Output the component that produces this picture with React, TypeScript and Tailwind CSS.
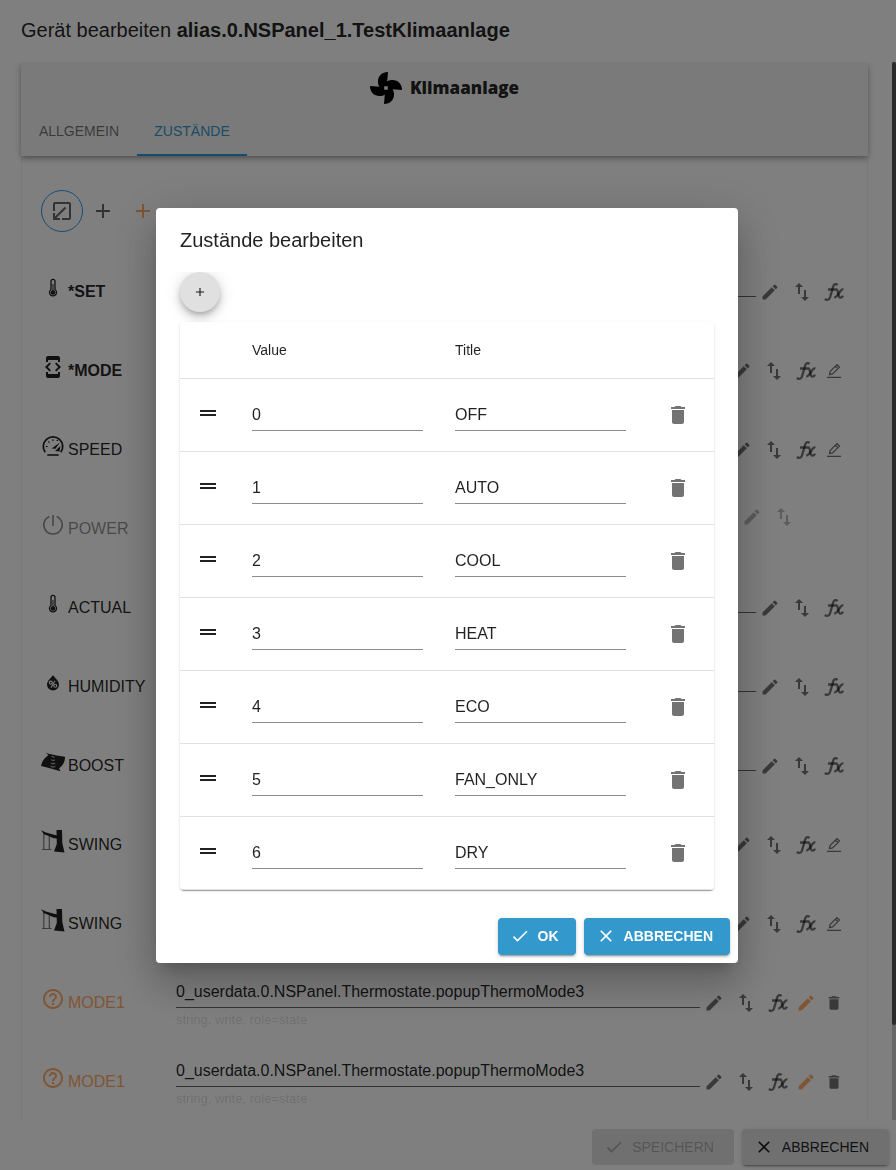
import React, { useState } from "react";
import {
  MdAdd,
  MdCheck,
  MdClose,
  MdDelete,
  MdDeveloperMode,
  MdDragHandle,
  MdEdit,
  MdHelpOutline,
  MdImportExport,
  MdOpenInNew,
} from "react-icons/md";

type IconProps = { className?: string };

const FanIcon: React.FC<IconProps> = ({ className }) => (
  <svg viewBox="0 0 32 32" className={className} fill="currentColor" aria-hidden="true">
    <path
      fillRule="evenodd"
      d="M18 0C12 0 8 4 8 9.500C8 12 8.500 13.500 9.500 14.800L0 14C0 20 4 24 9.500 24C12 24 13.500 23.500 14.800 22.500L14 32C20 32 24 28 24 22.500C24 20 23.500 18.500 22.500 17.200L32 18C32 12 28 8 22.500 8C20 8 18.500 8.500 17.200 9.500ZM14.200 14.200h3.600v3.600h-3.600z"
    />
  </svg>
);

const ThermometerIcon: React.FC<IconProps> = ({ className }) => (
  <svg viewBox="0 0 24 24" className={className} fill="none" stroke="currentColor" aria-hidden="true">
    <path d="M10 13.500V5.400a2 2 0 0 1 4 0v8.100a3.500 3.500 0 1 1-4 0z" strokeWidth="1.300" />
    <circle cx="12" cy="16.500" r="2.300" fill="currentColor" stroke="none" />
    <path d="M12 8v7" strokeWidth="1" />
  </svg>
);

const SpeedIcon: React.FC<IconProps> = ({ className }) => (
  <svg viewBox="0 0 24 24" className={className} fill="none" stroke="currentColor" aria-hidden="true">
    <path d="M4.2 18.3A9.7 9.7 0 1 1 19.8 18.3" strokeWidth="1.8" />
    <path d="M6.3 21h11.4" strokeWidth="1.6" />
    <path d="M5 12.5h1.8M7.3 7.5l1.2 1.2M12 5.2v1.7" strokeWidth="1.2" />
    <path d="M10.5 14.5L19 8.5l-4.5 6.3zM14 17l5.5-5-1 5.5zM15 7l1.5-1.5.8 1.6z" fill="currentColor" stroke="none" />
  </svg>
);

const PowerIcon: React.FC<IconProps> = ({ className }) => (
  <svg viewBox="0 0 24 24" className={className} fill="none" stroke="currentColor" strokeWidth="1.6" aria-hidden="true">
    <path d="M8.3 3.4a9.2 9.2 0 1 0 7.4 0M12 2v11" />
  </svg>
);

const HumidityIcon: React.FC<IconProps> = ({ className }) => (
  <svg viewBox="0 0 24 24" className={className} aria-hidden="true">
    <path d="M12 4c2 3 6 6 6 9.6a6 6 0 0 1-12 0C6 10 10 7 12 4z" fill="currentColor" />
    <g fill="none" stroke="#fff" strokeWidth="1.1">
      <circle cx="9.8" cy="11.6" r="1.5" />
      <circle cx="14.2" cy="14.8" r="1.5" />
      <path d="M14 9.8l-4 6.8" />
    </g>
  </svg>
);

const BoostIcon: React.FC<IconProps> = ({ className }) => (
  <svg viewBox="0 0 24 24" className={className} aria-hidden="true">
    <path d="M4.500 3l11 2.500 8.500 1.200c0 5-2 8.800-6 11.500l1.500 3L9 18.200 0 16c1-5 3.500-8 7.500-11z" fill="currentColor" />
    <g fill="none" stroke="#fff" strokeWidth="1" opacity=".8">
      <path d="M10.500 6.500l3 .8M10.300 9.600c1 1.100 2.600 1.100 3.600.2M9.800 12.900c1.200 1.200 3.200 1.200 4.400.1M9.500 16c1.400 1.400 3.600 1.400 5 .2" />
    </g>
  </svg>
);

const SwingIcon: React.FC<IconProps> = ({ className }) => (
  <svg viewBox="0 0 24 24" className={className} aria-hidden="true">
    <path d="M15.500 1H21l.3 13 2.200 9.500-10.500-1L15.800 15z" fill="currentColor" />
    <path d="M0 1.200l5 2.300 3.500 1L16 6.500v3l-3.500-.2-5.500-2.600-4-1.500z" fill="currentColor" />
    <path d="M2.800 4v16M8.300 7v13M1 20.500h9.500" fill="none" stroke="currentColor" strokeWidth="1.200" opacity=".6" />
  </svg>
);

const FunctionIcon: React.FC<IconProps> = ({ className }) => (
  <svg viewBox="0 0 20 18" className={className} fill="none" stroke="currentColor" strokeWidth="2.300" aria-hidden="true">
    <path d="M13.300 2.200C12.500.6 10.300.6 9.300 3.200L6 14.500C5.300 17 3 17.500.8 16" />
    <path d="M4 6.500h8.500c2 0 1.200 8.200 3.800 8.200 1.400 0 2.200-.8 2.700-2" />
    <path d="M19.400 6.500c-3.600-1.200-5 8.300-9.200 7.800" />
  </svg>
);

const PenLineIcon: React.FC<IconProps> = ({ className }) => (
  <svg viewBox="0 0 14 14" className={className} fill="none" stroke="currentColor" strokeWidth="1.300" aria-hidden="true">
    <path d="M2.500 10.700l.6-3.200 6.900-6.900 2.500 2.500-6.900 6.900zM8.600 2.200l2.400 2.400" />
    <path d="M0 13.400h14" />
  </svg>
);

interface StateRow {
  name: string;
  icon: React.ReactNode;
  required?: boolean;
  disabled?: boolean;
  custom?: boolean;
  enumerable?: boolean;
  value?: string;
  hint?: string;
}

const USER_STATE = "0_userdata.0.NSPanel.Thermostate.popupThermoMode3";

const STATES: StateRow[] = [
  { name: "SET", required: true, icon: <ThermometerIcon className="size-6" /> },
  { name: "MODE", required: true, enumerable: true, icon: <MdDeveloperMode className="size-6" /> },
  { name: "SPEED", enumerable: true, icon: <SpeedIcon className="size-6" /> },
  { name: "POWER", disabled: true, icon: <PowerIcon className="size-6" /> },
  { name: "ACTUAL", icon: <ThermometerIcon className="size-6" /> },
  { name: "HUMIDITY", icon: <HumidityIcon className="size-6" /> },
  { name: "BOOST", icon: <BoostIcon className="size-6" /> },
  { name: "SWING", enumerable: true, icon: <SwingIcon className="size-6" /> },
  { name: "SWING", enumerable: true, icon: <SwingIcon className="size-6" /> },
  { name: "MODE1", custom: true, value: USER_STATE, hint: "string, write, role=state", icon: <MdHelpOutline className="size-6" /> },
  { name: "MODE1", custom: true, value: USER_STATE, hint: "string, write, role=state", icon: <MdHelpOutline className="size-6" /> },
];

const MODES = ["OFF", "AUTO", "COOL", "HEAT", "ECO", "FAN_ONLY", "DRY"];

const RowButton: React.FC<{ label: string; className?: string; children: React.ReactNode }> = ({
  label,
  className = "w-7",
  children,
}) => (
  <button type="button" aria-label={label} className={`flex h-7 items-center justify-center ${className}`}>
    {children}
  </button>
);

const StateItem: React.FC<{ row: StateRow; index: number }> = ({ row, index }) => {
  const fieldId = `state-${index}`;

  return (
    <div className={`flex h-[79px] items-center ${row.disabled ? "opacity-50" : ""}`}>
      <label
        htmlFor={fieldId}
        className={`flex w-[135px] shrink-0 items-center gap-[3px] ${row.custom ? "text-[#ffab66]" : ""} ${
          row.required ? "font-bold" : ""
        }`}
      >
        <span className="mb-2">{row.icon}</span>
        {row.required ? "*" : ""}
        {row.name}
      </label>

      <div className="min-w-0 flex-1">
        {!row.disabled && (
          <>
            <input
              id={fieldId}
              defaultValue={row.value}
              className="block h-8 w-full border-b border-black/60 bg-transparent pt-0.5 outline-none"
            />
            <p className="mt-1 h-[18px] text-[13px] leading-4 text-black/15">{row.hint}</p>
          </>
        )}
      </div>

      <div className={`flex shrink-0 items-center text-black/55 ${row.disabled ? "mr-[46px] mb-6" : ""}`}>
        <RowButton label="ID auswählen">
          <MdEdit className="size-5" />
        </RowButton>
        <RowButton label="Lesen und Schreiben" className="w-9">
          <MdImportExport className="size-6" />
        </RowButton>
        {!row.disabled && (
          <RowButton label="Funktion">
            <FunctionIcon className="h-[18px] w-5" />
          </RowButton>
        )}
        {row.enumerable && (
          <RowButton label="Zustände bearbeiten">
            <PenLineIcon className="size-3.5" />
          </RowButton>
        )}
        {row.custom && (
          <>
            <RowButton label="Bearbeiten" className="w-7 text-[#ffab66]">
              <MdEdit className="size-5" />
            </RowButton>
            <RowButton label="Löschen">
              <MdDelete className="size-[18px]" />
            </RowButton>
          </>
        )}
      </div>
    </div>
  );
};

const EditStatesDialog: React.FC = () => {
  const [items, setItems] = useState(MODES.map((title, i) => ({ value: String(i), title })));

  const update = (index: number, key: "value" | "title", text: string) => {
    setItems((prev) => prev.map((item, i) => (i === index ? { ...item, [key]: text } : item)));
  };

  const fieldClass = "block h-8 w-full border-b border-black/45 bg-transparent pt-0.5 outline-none";

  return (
    <div
      role="dialog"
      aria-modal="true"
      aria-labelledby="dialog-title"
      className="w-full max-w-[582px] rounded bg-white shadow-[0_11px_15px_-7px_rgba(0,0,0,0.2),0_24px_38px_3px_rgba(0,0,0,0.14),0_9px_46px_8px_rgba(0,0,0,0.12)]"
    >
      <h2 id="dialog-title" className="px-6 py-4 text-xl leading-8">
        Zustände bearbeiten
      </h2>

      <div className="overflow-hidden px-6 pb-5">
        <button
          type="button"
          aria-label="Hinzufügen"
          onClick={() => setItems([...items, { value: String(items.length), title: "" }])}
          className="flex size-10 items-center justify-center rounded-full bg-[#e0e0e0] shadow-[0_3px_5px_-1px_rgba(0,0,0,0.2),0_6px_10px_rgba(0,0,0,0.14),0_1px_18px_rgba(0,0,0,0.12)]"
        >
          <MdAdd className="size-3.5" />
        </button>

        <div className="mt-2.5 rounded bg-white shadow-[0_2px_1px_-1px_rgba(0,0,0,0.2),0_1px_1px_rgba(0,0,0,0.14),0_1px_3px_rgba(0,0,0,0.12)]">
          <table className="w-full table-fixed border-separate border-spacing-0 text-left">
            <thead>
              <tr className="h-[57px] text-sm">
                <td className="w-14 border-b border-[#e0e0e0]" />
                <th className="border-b border-[#e0e0e0] px-4 font-normal">Value</th>
                <th className="border-b border-[#e0e0e0] px-4 font-normal">Title</th>
                <td className="w-18 border-b border-[#e0e0e0]" />
              </tr>
            </thead>
            <tbody>
              {items.map((item, i) => (
                <tr key={i} className="h-[73px]">
                  <td className="border-b border-[#e0e0e0] pb-1 pl-4">
                    <MdDragHandle className="size-6" />
                  </td>
                  <td className="border-b border-[#e0e0e0] px-4">
                    <input
                      aria-label={`Value ${i}`}
                      value={item.value}
                      onChange={(e) => update(i, "value", e.target.value)}
                      className={fieldClass}
                    />
                  </td>
                  <td className="border-b border-[#e0e0e0] px-4">
                    <input
                      aria-label={`Title ${i}`}
                      value={item.title}
                      onChange={(e) => update(i, "title", e.target.value)}
                      className={fieldClass}
                    />
                  </td>
                  <td className="border-b border-[#e0e0e0] px-3">
                    <button
                      type="button"
                      aria-label="Löschen"
                      onClick={() => setItems(items.filter((_, n) => n !== i))}
                      className="flex size-12 items-center justify-center text-black/55"
                    >
                      <MdDelete className="size-6" />
                    </button>
                  </td>
                </tr>
              ))}
            </tbody>
          </table>
        </div>
      </div>

      <div className="flex justify-end gap-2 p-2 text-sm font-bold text-white">
        <button
          type="button"
          className="flex h-[37px] items-center gap-2 rounded bg-[#3399cc] pr-[17px] pl-3 shadow-[0_3px_1px_-2px_rgba(0,0,0,0.2),0_2px_2px_rgba(0,0,0,0.14),0_1px_5px_rgba(0,0,0,0.12)]"
        >
          <MdCheck className="size-5" /> OK
        </button>
        <button
          type="button"
          className="flex h-[37px] items-center gap-2 rounded bg-[#3399cc] pr-[17px] pl-3 shadow-[0_3px_1px_-2px_rgba(0,0,0,0.2),0_2px_2px_rgba(0,0,0,0.14),0_1px_5px_rgba(0,0,0,0.12)]"
        >
          <MdClose className="size-5" /> ABBRECHEN
        </button>
      </div>
    </div>
  );
};

const App: React.FC = () => {
  return (
    <div className="flex h-screen flex-col overflow-hidden bg-white font-['Liberation_Sans',Arial,sans-serif] text-base text-black/87">
      <h1 className="px-[21px] pt-3.5 pb-4 text-xl leading-8">
        Gerät bearbeiten <b>alias.0.NSPanel_1.TestKlimaanlage</b>
      </h1>

      <div className="flex min-h-0 flex-1">
        <main className="min-w-0 flex-1 overflow-hidden pr-6 pl-[21px]">
          {/* Header */}
          <header className="relative bg-[#f5f5f5] shadow-[0_2px_4px_-1px_rgba(0,0,0,0.2),0_4px_5px_rgba(0,0,0,0.14),0_1px_10px_rgba(0,0,0,0.12)]">
            <div className="flex h-[46px] items-center justify-center gap-2 pt-1.5 font-['Open_Sans',sans-serif] text-[17px] font-extrabold">
              <FanIcon className="size-8 text-black" />
              Klimaanlage
            </div>
            <nav className="flex h-12 text-sm" role="tablist">
              <button type="button" role="tab" aria-selected="false" className="w-29 border-b-2 border-transparent text-black/55">
                ALLGEMEIN
              </button>
              <button
                type="button"
                role="tab"
                aria-selected="true"
                className="w-[110px] border-b-2 border-[#3399cc] text-[#3399cc]"
              >
                ZUSTÄNDE
              </button>
            </nav>
          </header>

          {/* Zustände */}
          <section className="border-x border-black/5 px-[19px] pt-[34px]">
            <div className="flex items-center text-black/60">
              <button
                type="button"
                aria-label="Ordner wechseln"
                className="flex size-[42px] items-center justify-center rounded-full border border-[#3399e6]"
              >
                <MdOpenInNew className="size-6 rotate-180" />
              </button>
              <button type="button" aria-label="Zustand hinzufügen" className="flex size-10 items-center justify-center">
                <MdAdd className="size-6" />
              </button>
              <button
                type="button"
                aria-label="Eigenen Zustand hinzufügen"
                className="flex size-10 items-center justify-center text-[#ffab66]"
              >
                <MdAdd className="size-6" />
              </button>
            </div>
            <div className="pt-5">
              {STATES.map((row, i) => (
                <StateItem key={i} row={row} index={i} />
              ))}
            </div>
          </section>
        </main>

        <div className="flex w-1 flex-col bg-[#d0d0d0]">
          <div className="h-[91%] rounded bg-[#575757]" />
        </div>
      </div>

      <footer className="relative flex h-[50px] shrink-0 items-center justify-end gap-2 bg-white px-[7px] pt-2 pb-1 text-sm">
        <button
          type="button"
          disabled
          className="flex h-9 items-center gap-2 rounded bg-[#e0e0e0] pr-5 pl-3 text-black/26"
        >
          <MdCheck className="size-5" /> SPEICHERN
        </button>
        <button
          type="button"
          className="flex h-9 items-center gap-2 rounded bg-[#e0e0e0] pr-5 pl-3 shadow-[0_3px_1px_-2px_rgba(0,0,0,0.2),0_2px_2px_rgba(0,0,0,0.14),0_1px_5px_rgba(0,0,0,0.12)]"
        >
          <MdClose className="size-5" /> ABBRECHEN
        </button>
      </footer>

      <div className="fixed inset-0 z-10 flex items-center justify-center bg-black/50 pr-0.5">
        <EditStatesDialog />
      </div>
    </div>
  );
};

export default App;
